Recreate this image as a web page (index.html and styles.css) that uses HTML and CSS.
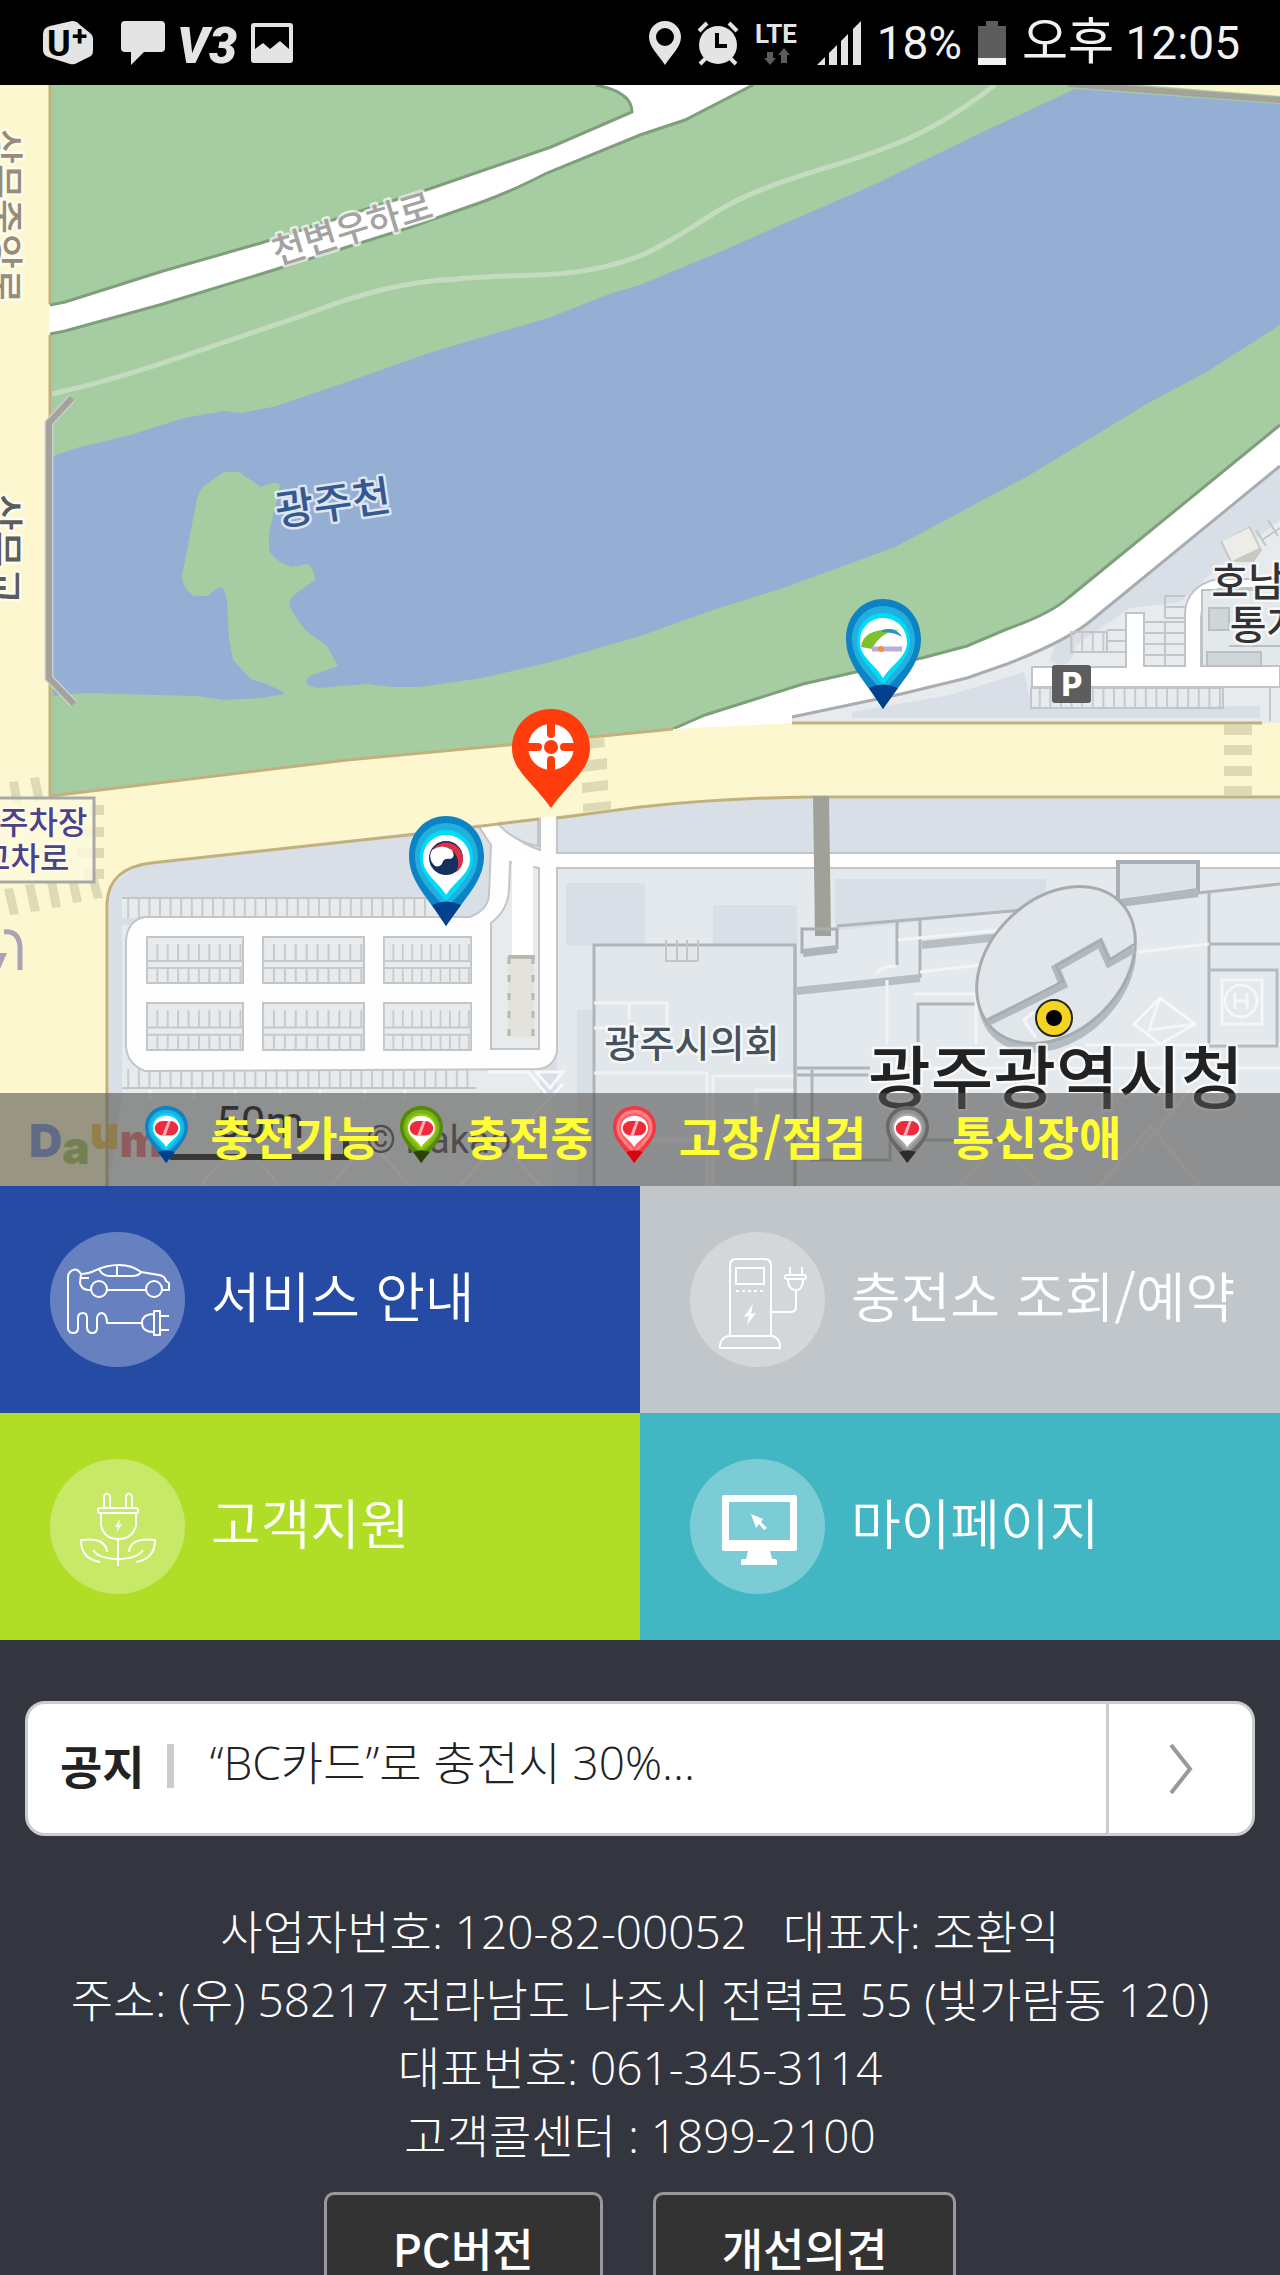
FILE: index.html
```html
<!DOCTYPE html>
<html lang="ko">
<head>
    <meta charset="UTF-8">
    <meta name="viewport" content="width=device-width, initial-scale=1.0">
    <title>전기차 충전 서비스</title>
    <link rel="stylesheet" href="styles.css">
</head>
<body>
    <!-- Shared shapes -->
    <svg class="defs" aria-hidden="true">
        <defs>
            <symbol id="pin" viewBox="0 0 75 110" preserveAspectRatio="none">
                <path class="pin-edge" d="M37 0C16 0 0 17 0 40c0 25 18 40 37 70 20-30 38-45 38-70C75 17 58 0 37 0z"/>
                <path class="pin-mid" d="M37 7C20 7 6 21 6 41c0 21 16 34 31 52 16-18 32-31 32-52C69 21 55 7 37 7z"/>
                <path class="pin-glow" d="M37 14c-15 0-26 12-26 28 0 17 15 28 26 44 12-16 27-27 27-44 0-16-12-28-27-28z"/>
                <path class="pin-tip" d="M23 89q14-7 29 0L37 110z"/>
                <path d="M37 19c-13 0-23 10-23 24 0 15 15 22 23 36 9-14 24-21 24-36 0-14-11-24-24-24z" fill="#fff"/>
            </symbol>
            <symbol id="charge-mark" viewBox="0 0 75 110" preserveAspectRatio="none">
                <rect x="17" y="29" width="41" height="28" rx="14" fill="#ee2a3c"/>
                <path d="M40 29l-10 28h6l9-28z" fill="#ffb3ba"/>
            </symbol>
            <pattern id="ticks" width="10.6" height="60" patternUnits="userSpaceOnUse">
                <rect width="2" height="60" fill="#c6cacc"/>
            </pattern>
            <symbol id="lot" viewBox="0 0 100 48" preserveAspectRatio="none">
                <rect x="1" y="1" width="98" height="46" fill="#e7ebee" stroke="#c3c6c8" stroke-width="2"/>
                <rect x="1" y="8" width="98" height="17" fill="url(#ticks)"/>
                <rect x="1" y="32" width="98" height="15" fill="url(#ticks)"/>
                <path d="M1 25h98M1 32h98" stroke="#c6cacc" stroke-width="2"/>
            </symbol>
        </defs>
    </svg>

    <div class="screen">
        <header class="status-bar">
            <div class="status-left">
                <svg class="icon-uplus" viewBox="0 0 60 44">
                    <path d="M7 5L29 0q5 0 8 4l10 8q3 2 3 5v13q0 3-2 5L34 42q-3 2-7 1L5 36q-5-2-5-7V13q0-6 7-8z" fill="#e4e4e4"/>
                    <text x="4" y="35" class="logo-u">U</text>
                    <text x="29" y="25" class="logo-plus">+</text>
                </svg>
                <svg class="icon-chat" viewBox="0 0 44 44">
                    <path d="M4 0h36q4 0 4 4v23q0 4-4 4H23L10 44V31H4q-4 0-4-4V4q0-4 4-4z" fill="#e4e4e4"/>
                </svg>
                <svg class="icon-v3" viewBox="0 0 50 44">
                    <text x="-6" y="42" class="logo-v">V3</text>
                </svg>
                <svg class="icon-photo" viewBox="0 0 42 40">
                    <path fill-rule="evenodd" d="M3 0h36q3 0 3 3v34q0 3-3 3H3q-3 0-3-3V3q0-3 3-3zm1 4v22l8-6 7 6 10-8 9 8V4z" fill="#e4e4e4"/>
                </svg>
            </div>
            <div class="status-right">
                <svg class="icon-place" viewBox="0 0 32 44">
                    <path fill-rule="evenodd" d="M16 0C7 0 0 7 0 16c0 10 9 17 16 28 7-11 16-18 16-28C32 7 25 0 16 0zm0 7a9 9 0 1 1 0 18 9 9 0 0 1 0-18z" fill="#e4e4e4"/>
                </svg>
                <svg class="icon-alarm" viewBox="0 0 42 44">
                    <circle cx="21" cy="24" r="19" fill="#e4e4e4"/>
                    <path d="M2 10l8-8M40 10l-8-8M9 37l-6 6M33 37l6 6" stroke="#e4e4e4" stroke-width="4"/>
                    <path d="M20 12v13h10" fill="none" stroke="#000" stroke-width="4"/>
                </svg>
                <svg class="icon-lte" viewBox="0 0 46 44">
                    <text x="0" y="22" class="lte-text">LTE</text>
                    <path d="M12 31h6v6h3l-6 7-6-7h3zM26 42h6v-8h3l-6-7-6 7h3z" fill="#5c5c5c"/>
                </svg>
                <svg class="icon-signal" viewBox="0 0 44 44">
                    <path d="M0 44l8-8v8zM12 44V32l8-8v20zM24 44V20l7-7v31zM36 44V8l8-8v44z" fill="#e4e4e4"/>
                </svg>
                <span class="status-text">18%</span>
                <svg class="icon-battery" viewBox="0 0 28 44">
                    <path d="M8 0h12v5h8v32H0V5h8z" fill="#5c5c5c"/>
                    <path d="M0 37h28v7H0z" fill="#f2f2f2"/>
                </svg>
                <span class="status-text"><span class="meridiem">오후</span> 12:05</span>
            </div>
        </header>

        <section class="map">
            <svg class="map-canvas" viewBox="0 85 1280 1101">
                <rect y="85" width="1280" height="1101" fill="#e6eaee"/>

                <!-- Park and river -->
                <path d="M49 85H1280V425L1048 613 1007 629 967 646 922 658 856 672 803 684 705 715 673 729 640 732 592 737 347 760 50 796z" fill="#a5cda1"/>
                <path d="M53 456L80 447 127 436 184 418 224 411 241 413 273 407 347 382 429 353 551 317 612 293 640 285 722 251 783 224 869 187 987 130 1075 89 1280 104V325L1205 373 1150 402 1028 476 895 547 783 588 713 610 640 636 551 662 482 678 420 687 392 687 367 684 318 688 285 694 261 698 224 700 196 696 82 693 53 696z" fill="#94aed4"/>
                <path d="M285 694Q280 688 251 679L233 660 229 639 227 602Q226 588 219 587L207 596H194Q182 588 182 576L195 509Q198 488 208 483L224 472H239L261 487Q276 480 280 485L278 495 269 533V551Q276 562 292 567L308 564Q315 570 315 580L294 595Q286 603 293 613L306 631Q322 642 327 646L338 666 312 675Q303 680 308 685L318 688 300 700z" fill="#a5cda1"/>
                <path d="M52 394Q114 380 184 356L310 313Q388 282 457 279C520 272 571 282 640 256 680 238 700 220 730 204 780 178 840 166 885 148 925 134 960 112 995 85" fill="none" stroke="#c5dbbf" stroke-width="5"/>

                <!-- Riverside road -->
                <path d="M48 305L65 302 163 271 261 243 429 189 551 147 632 112Q632 92 596 84L753 84 685 120 640 135 547 173Q510 192 482 202L408 228 261 274 163 304 65 331 48 335z" fill="#fff"/>
                <path d="M50 305L65 302 163 271 261 243 429 189 551 147 632 112Q632 92 596 85M753 85L685 120 640 135 547 173Q510 192 482 202L408 228 261 274 163 304 65 331 50 334" fill="none" stroke="#7f9f7c" stroke-width="3"/>
                <path d="M1142 85H1280V96z" fill="#fcf6cd"/>
                <path d="M1068 84L1280 100" stroke="#a4a29b" stroke-width="6"/>

                <!-- North-east block -->
                <path d="M1280 466L1093 619 1069 637 1007 664 967 678 901 694 792 717V724H1280z" fill="#e7ebee"/>
                <path d="M1280 466L1093 619 1069 637 1055 646 1050 660Q1070 675 1076 645L1130 608 1180 602 1215 570 1280 520zM852 712L950 695 1024 672 1032 708 1260 706V718H852z" fill="#d9dfe6"/>
                <path d="M1280 425L1048 613 1007 629 967 646 922 658 856 672 803 684 705 715 660 734 792 724V717L901 694 967 678 1007 664 1069 637 1093 619 1280 466z" fill="#fff"/>
                <path d="M1280 425L1068 598Q1050 614 1007 629L967 646 922 658 856 672 803 684 705 715 673 729" fill="none" stroke="#7f9f7c" stroke-width="3"/>
                <path d="M1280 466L1093 619Q1069 640 1007 664L967 678 901 694 792 717" fill="none" stroke="#a9adb1" stroke-width="3"/>
                <path d="M1126 613h18v53h41v-54q2-26 32-33h63v9h-58q-19 4-21 30v48h79v21H1032v-20h94z" fill="#fff" stroke="#c0c4c7" stroke-width="2"/>
                <path d="M1202 590h80v76h-80z" fill="#e3e8eb" stroke="#c0c4c7" stroke-width="2"/>
                <path d="M1209 608h20v22h-20zM1229 646h51M1207 652h54v14h-54z" fill="#cfd6da" stroke="#b9bfc3" stroke-width="2"/>
                <rect x="1031" y="688" width="192" height="20" fill="url(#ticks)" stroke="#c3c6c8" stroke-width="2"/>
                <rect x="1071" y="632" width="36" height="20" fill="url(#ticks)" stroke="#c3c6c8" stroke-width="2"/>
                <path d="M1107 630h18M1107 641h18M1107 652h18M1165 596h20M1165 607h20M1165 618h20M1165 596v22M1144 622h41M1144 633h41M1144 644h41M1144 655h41M1165 622v44M1262 540l18-12M1268 520l10 16M1256 530l10 16" stroke="#c3c6c8" stroke-width="2"/>
                <path d="M1220 542l30-16 12 24-8 12-24 0z" fill="#c9c9c4"/>
                <path d="M1222 541l27-13 10 20-27 13z" fill="#ecede8"/>
                <path d="M1270 687v34" stroke="#c3c6c8" stroke-width="2"/>

                <!-- South area -->
                <path d="M109 1186V903Q112 872 151 863L498 824 640 806 722 800 811 797H1280V853H557V1093H492V925H122V1093z" fill="#d9dfe6"/>
                <path d="M122 898H440V918H122zM122 1070H540V1186H122z" fill="#e7ebee"/>
                <path d="M491 897L500 830 540 850V1060H491z" fill="#e7ebee"/>
                <path d="M557 868H1280V1186H557z" fill="#e4e9ed"/>
                <rect x="122" y="898" width="310" height="20" fill="url(#ticks)"/>
                <rect x="122" y="1069" width="354" height="19" fill="url(#ticks)"/>
                <path d="M122 898H430M122 1088H476" stroke="#c3c6c8" stroke-width="2"/>

                <!-- Parking loop -->
                <path d="M145 917H470Q488 910 489 895L491 845 476 822 498 820Q515 842 540 850V814H557V853H1282V868H557V1052Q553 1068 538 1069L145 1071Q127 1064 126 1046V940Q128 920 145 917z" fill="#fefefe" stroke="#c3c6c8" stroke-width="2"/>
                <path d="M510 862L539 868V1049H491V923Q508 910 509 890z" fill="#e7ebee" stroke="#c3c6c8" stroke-width="2"/>
                <path d="M512 858H533V957H512z" fill="#fff"/>
                <path d="M508 957H534V1037H508z" fill="#e3e2dc"/>
                <path d="M509 957V1037M533 957V1037" stroke="#b8b8b0" stroke-width="3" stroke-dasharray="7 11"/>
                <path d="M508 957H535" stroke="#b8b8b0" stroke-width="4"/>
                <path d="M498 824L538 819V846Q515 842 498 824z" fill="#e0e5ea" stroke="#c3c6c8" stroke-width="2"/>
                <use href="#lot" x="146" y="936" width="98" height="48"/>
                <use href="#lot" x="262" y="936" width="103" height="48"/>
                <use href="#lot" x="383" y="936" width="89" height="48"/>
                <use href="#lot" x="146" y="1002" width="98" height="49"/>
                <use href="#lot" x="262" y="1002" width="103" height="49"/>
                <use href="#lot" x="383" y="1002" width="89" height="49"/>
                <path d="M488 1072H528L548 1096M536 1072H563L550 1088zM563 1084L520 1130M150 1100v-10M194 1100v-10M235 1100v-10M280 1100v-10M320 1100v-10M365 1100v-10M405 1100v-10M200 1186l40-46 40 46M330 1186l40-46 40 46M460 1186l40-46 40 46" fill="none" stroke="#f6f8f9" stroke-width="3"/>

                <!-- Trunk roads -->
                <path d="M0 85H49V796L347 760 592 737 673 729 792 723H1280V796H811L722 800 640 806 557 816 498 822 408 833 151 862Q109 868 107 903V1186H0z" fill="#fcf7ce"/>
                <path d="M50 85V304M50 335V796L347 760 592 737 673 729M792 723H1262M1280 797H811Q722 798 640 807L557 818M539 819L408 835 151 863Q109 868 107 903V1186" fill="none" stroke="#c2b17d" stroke-width="3"/>
                <path d="M72 398L49 423V678L74 704" fill="none" stroke="#c9cfd0" stroke-width="9"/>
                <path d="M72 398L49 423V678L74 704" fill="none" stroke="#a4a29b" stroke-width="6"/>

                <!-- Crosswalks -->
                <g fill="#dfdab6">
                    <path d="M1224 725h28v10h-28zM1224 745h28v10h-28zM1224 766h28v10h-28zM1224 786h28v9h-28z"/>
                    <path d="M580 740l24-3 1 10-24 3zM582 761l25-3v11l-25 3zM582 783l26-3v10l-26 3zM583 804l28-3v8l-28 3z"/>
                    <path d="M9 782l9-1 4 24-9 1zM30 778l9-1 5 24-9 1zM90 805h14v10H90zM80 827h24v10H80zM77 848h27v10H77zM84 869h20v10H84z"/>
                    <path d="M4 889l9-1 6 26-9 1zM25 885l9-1 6 27-9 1zM47 882l9-1 5 26-9 1zM68 880l9-1 5 23-9 1zM88 877l9-1 6 22-9 1z"/>
                </g>
                <path d="M20 970V946Q18 930 4 932" fill="none" stroke="#a9a3b6" stroke-width="5"/>
                <path d="M0 953h7l-7 16z" fill="#a9a3b6"/>

                <!-- City hall buildings -->
                <g fill="#d9dfe6">
                    <rect x="566" y="883" width="79" height="63" rx="3"/>
                    <rect x="713" y="905" width="84" height="50" rx="3"/>
                    <path d="M835 879h211v28l-211 24zM577 1010h17v176h-17z"/>
                </g>
                <path d="M594 945H795V1200H594z" fill="#e2e7eb" stroke="#b0b5b9" stroke-width="3"/>
                <path d="M594 1003H667V1039M629 1003V1020M594 1028H640M594 1073H707V1140H640M707 1073V1186M713 1186V1076H795M756 1110V1090H795" fill="none" stroke="#f0f3f4" stroke-width="3"/>
                <path d="M666 955V961H698M666 940V961M677 940V961M687 940V961M698 940V961" fill="none" stroke="#c3c6c8" stroke-width="2"/>
                <path d="M813 796H829L831 936H815z" fill="#a1a19a"/>
                <path d="M802 929H837V948L802 952z" fill="none" stroke="#a9aeb2" stroke-width="3"/>
                <path d="M803 953L837 949" stroke="#aeb5ba" stroke-width="8"/>
                <path d="M837 926L1025 910M795 945V1200M897 922V965M920 918V978M1198 893L1280 884M1209 893V1045M1209 944H1280M797 1075H870M797 1068H870M812 1070V1160H890V1140H1000M918 1042V1004H975" fill="none" stroke="#b0b5b9" stroke-width="3"/>
                <path d="M797 991L920 978M922 945L1000 937" fill="none" stroke="#b7bec3" stroke-width="8"/>
                <path d="M876 975Q880 966 896 966M898 940L1000 930M887 980V1045M920 972L980 965M915 994H976V1045M1138 952L1209 944M1085 1045H1280M1280 1068H900" fill="none" stroke="#f2f4f5" stroke-width="3"/>
                <path d="M1118 862H1198V890L1118 902z" fill="#dde4e7" stroke="#a9aeb2" stroke-width="4"/>
                <path d="M1120 903L1198 893" stroke="#b2b9be" stroke-width="8"/>
                <ellipse cx="1057" cy="974" rx="90" ry="66" transform="rotate(-44 1057 974)" fill="#b5bcc1"/>
                <ellipse cx="1056" cy="965" rx="90" ry="66" transform="rotate(-44 1056 965)" fill="#e1e6ea" stroke="#a6abaf" stroke-width="3"/>
                <path d="M988 1022L1063 985 1056 968 1100 943 1109 963 1134 949" fill="none" stroke="#b2b9be" stroke-width="8"/>
                <path d="M988 1020L1063 981 1056 966 1101 940 1109 960 1134 944" fill="none" stroke="#a6abaf" stroke-width="2"/>
                <path d="M1160 998L1134 1024 1160 1044 1195 1024zM1160 998L1149 1030 1195 1024M1034 1012l-10 8 12 18M1222 980h40v44h-40z" fill="none" stroke="#f4f6f7" stroke-width="3"/>
                <path d="M1209 970H1277V1046H1209" fill="none" stroke="#b5bbbf" stroke-width="3"/>
                <circle cx="1241" cy="1001" r="16" fill="none" stroke="#f4f6f7" stroke-width="3"/>
                <path d="M1235 993v16M1247 993v16M1235 1001h12" stroke="#f4f6f7" stroke-width="3"/>
                <path d="M960 1186l40-46 40 46M1100 1186l50-60 50 60M1140 1150l50-60" fill="none" stroke="#f0f3f4" stroke-width="3"/>

                <!-- Labels -->
                <rect x="-6" y="798" width="100" height="84" fill="#fdfae0" fill-opacity=".8" stroke="#aaa7a9" stroke-width="3"/>
                <text class="label crossing" x="-1" y="834">주차장</text>
                <text class="label crossing" x="-19" y="870">교차로</text>
                <text class="label street" transform="translate(-9 129) rotate(90)">상무중앙로</text>
                <text class="label bridge" transform="translate(-11 494) rotate(90)">상무교</text>
                <text class="label road" transform="translate(356 241) rotate(-17)">천변우하로</text>
                <text class="label river" transform="translate(335 518) rotate(-8)">광주천</text>
                <text class="label office" x="1285" y="596">호남지방</text>
                <text class="label office" x="1285" y="639">통계청</text>
                <text class="label council" x="692" y="1057">광주시의회</text>
                <text class="label city-hall" x="1056" y="1103">광주광역시청</text>
                <rect x="1052" y="665" width="39" height="38" rx="3" fill="#5d5d5d"/>
                <text class="parking" x="1072" y="696">P</text>
                <circle cx="1054" cy="1018" r="18" fill="#f5d322" stroke="#26241c" stroke-width="2"/>
                <circle cx="1054" cy="1018" r="8"/>

                <!-- Scale and map credit -->
                <text class="daum" x="29" y="1157"><tspan fill="#3a62d8">D</tspan><tspan fill="#76b014" dy="7">a</tspan><tspan fill="#f0a800" dy="-15">u</tspan><tspan fill="#e8373e" dy="8">m</tspan></text>
                <text class="scale" x="216" y="1138">50m</text>
                <path d="M170 1157H346V1141" fill="none" stroke="#111" stroke-width="6"/>
                <text class="credit" x="366" y="1153">© Kakao</text>

                <!-- Stations and current position -->
                <g class="pin-blue">
                    <use href="#pin" x="846" y="599" width="75" height="110"/>
                    <path d="M861 647Q863 627 900 630 880 632 872 649z" fill="#7cc22b"/>
                    <path d="M882 630Q896 626 902 637 894 632 882 632z" fill="#2f8fc4"/>
                    <path d="M872 649h30" stroke="#b9aedb" stroke-width="5"/>
                    <circle cx="881" cy="649" r="3" fill="#f58a4a"/>
                    <use href="#pin" x="409" y="816" width="75" height="110"/>
                    <circle cx="446" cy="858" r="17" fill="#16305f"/>
                    <path d="M432 850A17 17 0 0 1 463 858Q463 868 456 872 462 860 452 850 442 843 432 850z" fill="#dd3046"/>
                    <path d="M432 850Q442 843 452 850 456 858 450 859 443 858 442 864 437 869 433 864 428 857 432 850z" fill="#fff"/>
                </g>
                <path d="M551 709C529 709 512 726 512 748 512 770 530 779 551 808 572 779 590 770 590 748 590 726 573 709 551 709z" fill="#ff3c0c"/>
                <circle cx="551" cy="747" r="23" fill="#fff"/>
                <circle cx="551" cy="747" r="7" fill="#ff3c0c"/>
                <path d="M551 722V734M551 760V772M526 747H538M564 747H576" stroke="#ff3c0c" stroke-width="8" stroke-linecap="round"/>
            </svg>

            <ul class="legend">
                <li><svg class="legend-pin pin-blue"><use href="#pin"/><use href="#charge-mark"/></svg>충전가능</li>
                <li><svg class="legend-pin pin-green"><use href="#pin"/><use href="#charge-mark"/></svg>충전중</li>
                <li><svg class="legend-pin pin-red"><use href="#pin"/><use href="#charge-mark"/></svg>고장/점검</li>
                <li><svg class="legend-pin pin-gray"><use href="#pin"/><use href="#charge-mark"/></svg>통신장애</li>
            </ul>
        </section>

        <nav class="menu">
            <a class="tile tile-service" href="#service">
                <svg class="tile-icon" viewBox="0 0 135 135">
                    <path d="M32 42Q38 42 44 39 56 33 69 33 82 33 91 40L109 43Q115 44 116 49L119 51V58H112M97 58H57M42 58H38Q31 57 30 51L31 42Q26 34 20 40 18 42 18 45V97Q19 101 23 101 28 101 28 96V86Q28 81 33 81 37 81 37 86V96Q38 101 42 101 47 101 47 96V86Q48 81 52 81 57 82 57 91H92M31 46H39M49 37Q52 44 60 44H82Q89 44 91 40M67 34V44"/>
                    <circle cx="49" cy="57" r="8"/>
                    <circle cx="104" cy="57" r="8"/>
                    <path d="M104 82Q92 82 92 91 92 100 104 100zM104 79H110V103H104zM110 84H119M110 98H119"/>
                </svg>
                <span class="tile-label">서비스 안내</span>
            </a>
            <a class="tile tile-station" href="#station">
                <svg class="tile-icon" viewBox="0 0 135 135">
                    <path d="M40 104V34Q40 27 46 27H75Q81 27 81 34V104M46 36H74V52H46zM30 116V113Q32 104 40 104H81Q88 104 90 113V116zM81 80H100Q106 80 106 75V58M98 47Q98 58 106 58 113 58 113 47M100 35V43M112 35V43"/>
                    <path d="M46 59H75" stroke-dasharray="3 3"/>
                    <rect x="95" y="43" width="21" height="4" rx="2"/>
                    <path class="solid" d="M63 72L54 85 59 84 57 93 66 81 61 82z"/>
                </svg>
                <span class="tile-label">충전소 조회/예약</span>
            </a>
            <a class="tile tile-support" href="#support">
                <svg class="tile-icon" viewBox="0 0 135 135">
                    <path d="M54 49V37Q57 32 60 37V49M76 49V37Q79 32 82 37V49M51 54V66Q54 80 68 80 83 80 86 66V54M56 54H68M76 54H86M68 80V107"/>
                    <rect x="48" y="49" width="40" height="5" rx="2"/>
                    <path d="M50 103Q31 100 31 81 56 78 57 93M43 91Q49 100 68 100 87 100 93 91M86 103Q105 100 105 81 80 78 79 93"/>
                    <path class="solid" d="M70 60L65 68 68 68 66 74 72 65 69 66z"/>
                </svg>
                <span class="tile-label">고객지원</span>
            </a>
            <a class="tile tile-mypage" href="#mypage">
                <svg class="tile-icon" viewBox="0 0 135 135">
                    <path class="solid" fill-rule="evenodd" d="M34 36H105Q107 36 107 38V90Q107 92 105 92H80L82 100H85Q87 100 87 102V106H51V102Q51 100 53 100H56L58 92H34Q32 92 32 90V38Q32 36 34 36zM39 43V81H100V43z"/>
                    <path class="solid" d="M61 55L73 60 71 63 77 69 74 71 69 65 66 69z"/>
                </svg>
                <span class="tile-label">마이페이지</span>
            </a>
        </nav>

        <main class="bottom">
            <section class="notice">
                <h2 class="notice-title">공지</h2>
                <a class="notice-link" href="#notice">“BC카드”로 충전시 30%...</a>
                <button class="notice-next" type="button" aria-label="다음 공지">
                    <svg class="chevron" viewBox="0 0 24 50"><path d="M2 1L21 25 2 49"/></svg>
                </button>
            </section>

            <footer class="company">
                <p>사업자번호: 120-82-00052 &nbsp; 대표자: 조환익</p>
                <p>주소: (우) 58217 전라남도 나주시 전력로 55 (빛가람동 120)</p>
                <p>대표번호: 061-345-3114</p>
                <p>고객콜센터 : 1899-2100</p>
                <div class="company-actions">
                    <button class="action" type="button">PC버전</button>
                    <button class="action" type="button">개선의견</button>
                </div>
            </footer>
        </main>
    </div>
</body>
</html>
```
FILE: styles.css
```css
* {
    box-sizing: border-box;
}

body {
    margin: 0;
    font-family: 'Noto Sans CJK KR', 'Noto Sans', sans-serif;
    background: #33353f;
    color: #fff;
}

.defs {
    position: absolute;
    width: 0;
    height: 0;
}

.screen {
    height: 100vh;
    overflow: hidden;
}

/* Status bar */
.status-bar {
    display: flex;
    justify-content: space-between;
    align-items: center;
    height: 85px;
    padding: 0 40px 0 43px;
    background: #000;
    color: #f2f2f2;
}

.status-left,
.status-right {
    display: flex;
    align-items: center;
}

.status-left {
    gap: 18px;
}

.status-right {
    gap: 16px;
}

.status-bar svg {
    height: 44px;
    flex: none;
    overflow: visible;
}

.status-bar .icon-photo { width: 42px; height: 40px; }
.icon-uplus { width: 60px; }
.icon-chat { width: 44px; }
.icon-v3 { width: 50px; }
.icon-place { width: 32px; }
.icon-alarm { width: 42px; }
.icon-lte { width: 46px; }
.icon-signal { width: 44px; }
.icon-battery { width: 28px; }

.status-text {
    font-family: Roboto, 'Noto Sans CJK KR', sans-serif;
    font-size: 46px;
    line-height: 60px;
}

.meridiem {
    font-size: 50px;
}

.logo-u,
.logo-plus {
    font-family: Roboto, sans-serif;
    font-weight: 700;
    font-size: 36px;
}

.logo-plus {
    font-size: 28px;
}

.logo-v {
    font-family: Roboto, sans-serif;
    font-weight: 900;
    font-style: italic;
    font-size: 50px;
    fill: #e4e4e4;
}

.lte-text {
    font-family: Roboto, sans-serif;
    font-weight: 700;
    font-size: 26px;
    fill: #e4e4e4;
}

/* Map */
.map {
    position: relative;
}

.map-canvas {
    display: block;
    width: 100%;
}

.label {
    paint-order: stroke;
    stroke: #fff;
    stroke-width: 5px;
    stroke-linejoin: round;
    stroke-opacity: .7;
    font-weight: 500;
}

.crossing { font-size: 32px; fill: #4b4386; stroke-width: 2px; }
.street { font-size: 38px; fill: #988c78; }
.bridge { font-size: 40px; fill: #5c5c5c; }
.road { font-size: 36px; fill: #a5a2a2; text-anchor: middle; }
.river { font-size: 42px; fill: #34588f; text-anchor: middle; }
.office { font-size: 40px; fill: #333; text-anchor: middle; }
.council { font-size: 38px; fill: #47525e; text-anchor: middle; }
.city-hall { font-size: 68px; fill: #222; text-anchor: middle; }

.parking {
    font-family: Inter, sans-serif;
    font-weight: 800;
    font-size: 32px;
    fill: #fff;
    text-anchor: middle;
}

.daum {
    font-family: Inter, sans-serif;
    font-weight: 900;
    font-size: 46px;
    opacity: .7;
}

.scale {
    font-family: Roboto, sans-serif;
    font-size: 44px;
}

.credit {
    font-family: Roboto, sans-serif;
    font-size: 38px;
    fill: #444;
}

/* Station pins */
.pin-edge { fill: var(--pin-edge); }
.pin-mid { fill: var(--pin-mid); }
.pin-glow { fill: var(--pin-glow); }
.pin-tip { fill: var(--pin-tip); }

.pin-blue {
    --pin-edge: #0c83c4;
    --pin-mid: #1fb0de;
    --pin-glow: #00dcf5;
    --pin-tip: #023f8c;
}

.pin-green {
    --pin-edge: #558a08;
    --pin-mid: #7db020;
    --pin-glow: #8fd000;
    --pin-tip: #2b4206;
}

.pin-red {
    --pin-edge: #ee3b42;
    --pin-mid: #ff7f84;
    --pin-glow: #ff5c62;
    --pin-tip: #d4060f;
}

.pin-gray {
    --pin-edge: #686868;
    --pin-mid: #929292;
    --pin-glow: #a8a8a8;
    --pin-tip: #2c2c2c;
}

.legend {
    position: absolute;
    left: 0;
    right: 0;
    bottom: 0;
    display: flex;
    justify-content: center;
    align-items: center;
    gap: 20px;
    height: 93px;
    margin: 0;
    padding: 0 14px 10px 0;
    list-style: none;
    background: rgba(85, 83, 82, .6);
    color: #ff3;
    font-size: 46px;
    font-weight: 700;
    line-height: 60px;
}

.legend li {
    display: flex;
    align-items: center;
    gap: 23px;
    white-space: nowrap;
}

.legend-pin {
    width: 43px;
    height: 57px;
}

/* Menu tiles */
.menu {
    display: grid;
    grid-template-columns: 1fr 1fr;
}

.tile {
    display: flex;
    align-items: center;
    gap: 26px;
    padding: 46px 0 46px 50px;
    color: #fff;
    font-size: 54px;
    font-weight: 350;
    line-height: 80px;
    text-decoration: none;
    white-space: nowrap;
}

.tile-label {
    padding-bottom: 10px;
}

.tile-service { background: #264ba5; }
.tile-station { background: #c1c6cb; }
.tile-support { background: #b0de27; }
.tile-mypage { background: #42b7c3; }

.tile-icon {
    flex: none;
    width: 135px;
    height: 135px;
    border-radius: 50%;
    background: rgba(255, 255, 255, .3);
    fill: none;
    stroke: #fff;
    stroke-width: 2px;
    stroke-linejoin: round;
}

.tile-icon .solid {
    fill: #fff;
    stroke: none;
}

/* Notice */
.bottom {
    padding: 61px 25px 0;
}

.notice {
    display: flex;
    align-items: center;
    height: 135px;
    overflow: hidden;
    padding-bottom: 6px;
    border: 3px solid #ccc;
    border-radius: 20px;
    background: #fff;
    color: #222;
}

.notice-title {
    margin: 0;
    padding: 0 22px 4px 32px;
    border-right: 7px solid #ccc;
    font-size: 46px;
    font-weight: 700;
    line-height: 40px;
}

.notice-link {
    flex: 1;
    padding: 0 0 8px 36px;
    color: #222;
    font-family: 'Open Sans', 'Noto Sans CJK KR', sans-serif;
    font-size: 46px;
    font-weight: 300;
    line-height: 60px;
    text-decoration: none;
}

.notice-next {
    display: flex;
    justify-content: center;
    align-items: center;
    align-self: stretch;
    width: 146px;
    margin-bottom: -6px;
    padding: 0;
    border: 0;
    border-left: 3px solid #ccc;
    background: none;
}

.chevron {
    width: 24px;
    height: 50px;
    fill: none;
    stroke: #999;
    stroke-width: 4px;
}

/* Company info */
.company {
    padding-top: 61px;
    font-family: 'Open Sans', 'Noto Sans CJK KR', sans-serif;
    font-size: 46px;
    font-weight: 300;
    line-height: 68px;
    text-align: center;
}

.company p {
    margin: 0;
    white-space: nowrap;
}

.company-actions {
    display: flex;
    justify-content: center;
    gap: 50px;
    padding: 23px 0 60px;
}

.action {
    height: 110px;
    padding: 0 66px;
    border: 3px solid #999;
    border-radius: 10px;
    background: #333;
    color: #fff;
    font-family: 'Noto Sans CJK KR', sans-serif;
    font-size: 45px;
    font-weight: 500;
}
```
